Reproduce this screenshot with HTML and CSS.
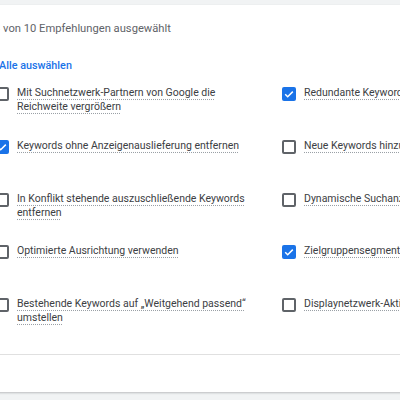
FILE: index.html
```html
<!DOCTYPE html>
<html lang="de">
<head>
<meta charset="utf-8">
<link rel="stylesheet" href="styles.css">
</head>
<body>
<div class="card">
  <div class="header">3 von 10 Empfehlungen ausgewählt</div>
  <div class="link">Alle auswählen</div>
  <div class="grid">
    <div class="item"><span class="box"></span><span class="label"><span class="txt">Mit Suchnetzwerk-Partnern von Google die Reichweite vergrößern</span></span></div>
    <div class="item"><span class="box checked"><svg viewBox="0 0 14 14" width="14" height="14"><path d="M3.2 7.2l2.5 2.5 5.1-5.1" fill="none" stroke="#fff" stroke-width="1.5"/></svg></span><span class="label"><span class="txt">Redundante Keywords entfernen</span></span></div>
    <div class="item"><span class="box checked"><svg viewBox="0 0 14 14" width="14" height="14"><path d="M3.2 7.2l2.5 2.5 5.1-5.1" fill="none" stroke="#fff" stroke-width="1.5"/></svg></span><span class="label"><span class="txt">Keywords ohne Anzeigenauslieferung entfernen</span></span></div>
    <div class="item"><span class="box"></span><span class="label"><span class="txt">Neue Keywords hinzufügen</span></span></div>
    <div class="item"><span class="box"></span><span class="label"><span class="txt">In Konflikt stehende auszuschließende Keywords entfernen</span></span></div>
    <div class="item"><span class="box"></span><span class="label"><span class="txt">Dynamische Suchanzeigen hinzufügen</span></span></div>
    <div class="item"><span class="box"></span><span class="label"><span class="txt">Optimierte Ausrichtung verwenden</span></span></div>
    <div class="item"><span class="box checked"><svg viewBox="0 0 14 14" width="14" height="14"><path d="M3.2 7.2l2.5 2.5 5.1-5.1" fill="none" stroke="#fff" stroke-width="1.5"/></svg></span><span class="label"><span class="txt">Zielgruppensegmente zur Beobachtung hinzufügen</span></span></div>
    <div class="item"><span class="box"></span><span class="label"><span class="txt">Bestehende Keywords auf „Weitgehend passend“ umstellen</span></span></div>
    <div class="item"><span class="box"></span><span class="label"><span class="txt">Displaynetzwerk-Aktivitäten hinzufügen</span></span></div>
  </div>
  <div class="divider"></div>
</div>
</body>
</html>
```

FILE: styles.css
```css
html, body {
  margin: 0;
  padding: 0;
}
body {
  background: #f1f3f4;
  width: 400px;
  height: 400px;
  overflow: hidden;
  font-family: Roboto, "Liberation Sans", sans-serif;
}
.card {
  margin-top: 5px;
  margin-left: -40px;
  width: 700px;
  height: 387px;
  box-sizing: border-box;
  padding: 16px 0 0 35px;
  background: #fff;
  box-shadow: 0 1px 2px rgba(60, 64, 67, 0.3);
}
.header {
  font-size: 11.2px;
  line-height: 16px;
  color: #5f6368;
  margin-left: -1px;
}
.link {
  margin-top: 21px;
  margin-left: 4px;
  font-size: 10.8px;
  line-height: 16px;
  font-weight: 500;
  color: #1a73e8;
}
.grid {
  margin-top: 12px;
  display: grid;
  grid-template-columns: 287px 287px;
  grid-auto-rows: 52.75px;
}
.item {
  display: flex;
  align-items: flex-start;
  gap: 8px;
}
.box {
  flex: none;
  width: 14px;
  height: 14px;
  box-sizing: border-box;
  border: 2px solid #5f6368;
  border-radius: 2px;
  margin-top: 1px;
}
.box.checked {
  border: none;
  background: #1a73e8;
}
.box svg {
  display: block;
}
.label {
  width: 245px;
  font-size: 10.5px;
  line-height: 14px;
  color: #3c4043;
}
.txt {
  text-decoration: underline dotted #9aa0a6;
  text-underline-offset: 3px;
}
.divider {
  margin-top: 4px;
  height: 1px;
  background: #e0e0e0;
  margin-left: -35px;
}
```
